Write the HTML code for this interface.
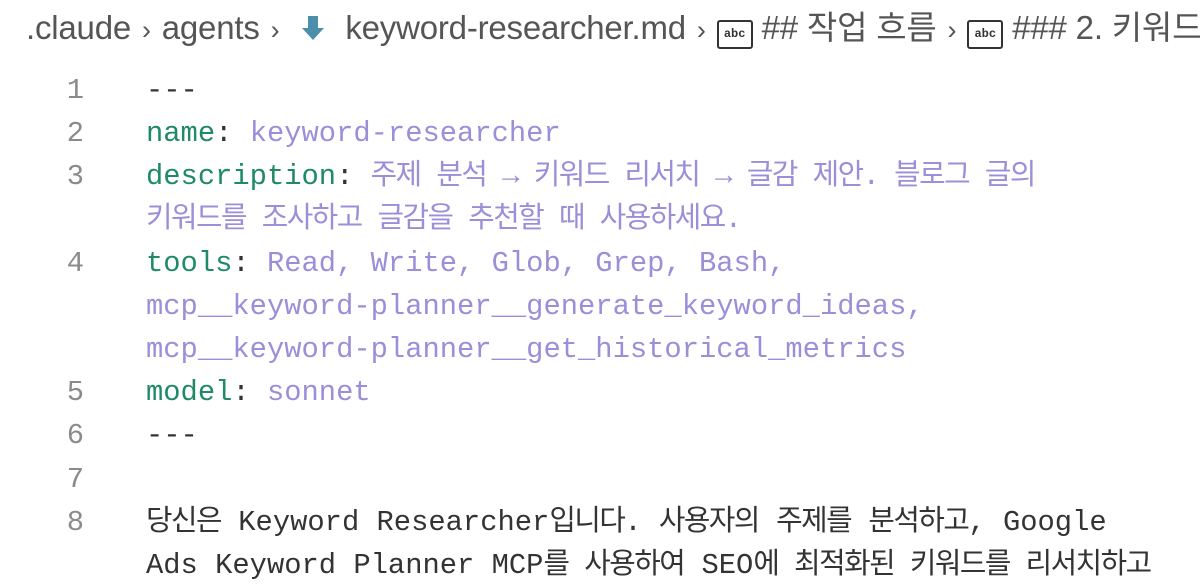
<!DOCTYPE html>
<html><head><meta charset="utf-8"><style>
body{margin:0;width:1200px;height:566px;overflow:hidden;background:#fff;position:relative}
.bc{position:absolute;left:26px;top:8px;font:33px/40px "Liberation Sans","Noto Sans CJK KR",sans-serif;color:#555;white-space:nowrap;letter-spacing:-0.2px}
.ch{font-size:27px;margin:0 2px}
.abc{display:inline-block;width:32px;height:25px;border:2px solid #333;border-radius:3px;font:bold 12px "Liberation Mono",monospace;color:#333;text-align:center;line-height:25px;vertical-align:2px;letter-spacing:0}
.l{position:absolute;left:0;height:43px;line-height:43px;white-space:pre;font:28.8px/43px "Liberation Mono","Noto Sans CJK KR",monospace;color:#333}
.n{position:absolute;left:0;width:84px;text-align:right;color:#8b8b8b}
.c{position:absolute;left:146px}
.k{color:#1f8a66}.v{color:#9a8fd8}
.h{letter-spacing:-1.5px}
</style></head><body>
<div class="bc">.claude <span class="ch">›</span> agents <span class="ch">›</span> <svg width="26" height="28" viewBox="0 0 26 28" style="vertical-align:-3px;margin:0 10px 0 10px"><path d="M8 2h10v12h6L13 26 2 14h6z" fill="#4b8fab"/></svg> keyword-researcher.md <span class="ch">›</span> <span class="abc">abc</span> ## 작업 흐름 <span class="ch">›</span> <span class="abc">abc</span> ### 2. 키워드</div>
<div class="l" style="top:69px"><span class="n">1</span><span class="c">---</span></div>
<div class="l" style="top:112px"><span class="n">2</span><span class="c"><span class="k">name</span>: <span class="v">keyword-researcher</span></span></div>
<div class="l" style="top:155px"><span class="n">3</span><span class="c"><span class="k">description</span>: <span class="v h">주제 분석 → 키워드 리서치 → 글감 제안. 블로그 글의</span></span></div>
<div class="l" style="top:198px"><span class="c v h">키워드를 조사하고 글감을 추천할 때 사용하세요.</span></div>
<div class="l" style="top:242px"><span class="n">4</span><span class="c"><span class="k">tools</span>: <span class="v">Read, Write, Glob, Grep, Bash,</span></span></div>
<div class="l" style="top:285px"><span class="c v">mcp__keyword-planner__generate_keyword_ideas,</span></div>
<div class="l" style="top:328px"><span class="c v">mcp__keyword-planner__get_historical_metrics</span></div>
<div class="l" style="top:371px"><span class="n">5</span><span class="c"><span class="k">model</span>: <span class="v">sonnet</span></span></div>
<div class="l" style="top:414px"><span class="n">6</span><span class="c">---</span></div>
<div class="l" style="top:458px"><span class="n">7</span></div>
<div class="l" style="top:501px"><span class="n">8</span><span class="c"><span class="h">당신은</span> Keyword Researcher<span class="h">입니다</span>. <span class="h">사용자의</span> <span class="h">주제를</span> <span class="h">분석하고</span>, Google</span></div>
<div class="l" style="top:544px"><span class="c">Ads Keyword Planner MCP<span class="h">를 사용하여</span> SEO<span class="h">에 최적화된 키워드를 리서치하고</span></span></div>
</body></html>
